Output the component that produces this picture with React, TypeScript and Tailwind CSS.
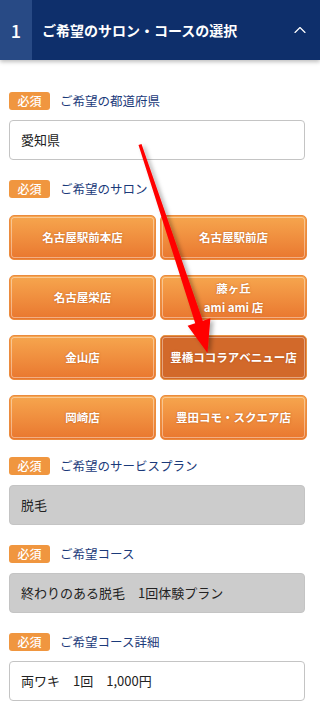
import { ChevronUp } from "lucide-react";

const font = {
  fontFamily: '"Noto Sans CJK JP", "Noto Sans", sans-serif',
};

const salons = [
  { name: "名古屋駅前本店" },
  { name: "名古屋駅前店" },
  { name: "名古屋栄店" },
  { name: "藤ヶ丘", sub: "ami ami 店" },
  { name: "金山店" },
  { name: "豊橋ココラアベニュー店", active: true },
  { name: "岡崎店" },
  { name: "豊田コモ・スクエア店" },
];

function Label({ children }: { children: React.ReactNode }) {
  return (
    <div className="flex items-center gap-[10px] h-[18px] mb-[10px]">
      <span className="flex items-center justify-center w-[41px] h-[18px] rounded-[3px] bg-[#f0963f] text-white text-[12px] font-medium leading-none">
        必須
      </span>
      <span className="text-[12.5px] text-[#1b3a7a] leading-none">{children}</span>
    </div>
  );
}

function Field({ value, disabled }: { value: string; disabled?: boolean }) {
  return (
    <div
      className={
        disabled
          ? "h-[40px] w-[296px] flex items-center pl-[11px] rounded-[4px] border border-[#c4c4c4] bg-[#cccccc] text-[13px] text-[#222] mb-[20px] whitespace-pre"
          : "h-[40px] w-[296px] flex items-center pl-[11px] rounded-[4px] border border-[#c4c4c4] bg-white text-[13px] text-[#222] mb-[20px] whitespace-pre"
      }
    >
      {value}
    </div>
  );
}

function Arrow() {
  return (
    <svg
      className="absolute left-0 top-0 pointer-events-none"
      width="320"
      height="708"
      viewBox="0 0 320 708"
    >
      <defs>
        <filter id="sh" x="-20%" y="-20%" width="140%" height="140%">
          <feDropShadow dx="3" dy="2" stdDeviation="2" floodColor="#000" floodOpacity="0.3" />
        </filter>
      </defs>
      <polygon
        filter="url(#sh)"
        fill="#ff0000"
        points="138.5,145 141.5,144 202.8,320.8 210.4,318.3 207.5,353 187.6,325.7 195.2,323.2"
      />
    </svg>
  );
}

export default function App() {
  return (
    <div className="relative w-[320px] h-[708px] bg-white overflow-hidden" style={font}>
      <div className="flex h-[60px] bg-[#0e2f6b] text-white shadow-[0_2px_4px_rgba(0,0,0,0.25)]">
        <div className="w-[32px] flex items-center justify-center bg-[#284a85] text-[18px] font-medium">
          1
        </div>
        <div className="flex-1 flex items-center pl-[10px] text-[14px] font-bold">
          ご希望のサロン・コースの選択
        </div>
        <div className="w-[40px] flex items-center justify-center">
          <ChevronUp className="w-[20px] h-[20px]" strokeWidth={1.4} />
        </div>
      </div>

      <div className="pl-[9px] pt-[32px]">
        <Label>ご希望の都道府県</Label>
        <Field value="愛知県" />

        <Label>ご希望のサロン</Label>
        <div className="grid grid-cols-2 w-[298px] gap-x-[4px] gap-y-[15px] mt-[17px] mb-[17px]">
          {salons.map((s) => (
            <button
              key={s.name}
              className={
                s.active
                  ? "h-[45px] rounded-[5px] border border-[#e79545] bg-[#d2692a] outline-1 outline-white/40 -outline-offset-3 text-white text-[11.5px] font-bold leading-[19px] [text-shadow:0_0_2px_rgba(150,60,10,0.6)]"
                  : "h-[45px] rounded-[5px] border border-[#eb8b3e] bg-linear-to-b from-[#f6a64e] to-[#e9772f] outline-1 outline-white/40 -outline-offset-3 text-white text-[11.5px] font-bold leading-[19px] [text-shadow:0_0_2px_rgba(150,60,10,0.6)]"
              }
            >
              {s.name}
              {s.sub && (
                <>
                  <br />
                  {s.sub}
                </>
              )}
            </button>
          ))}
        </div>

        <Label>ご希望のサービスプラン</Label>
        <Field value="脱毛" disabled />

        <Label>ご希望コース</Label>
        <Field value="終わりのある脱毛　1回体験プラン" disabled />

        <Label>ご希望コース詳細</Label>
        <Field value="両ワキ　1回　1,000円" />
      </div>

      <Arrow />
    </div>
  );
}
